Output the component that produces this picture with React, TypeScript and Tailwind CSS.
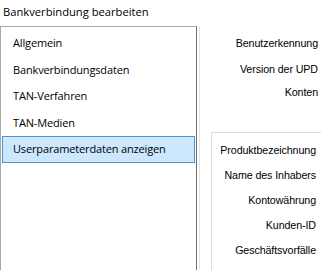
const items = [
  'Allgemein',
  'Bankverbindungsdaten',
  'TAN-Verfahren',
  'TAN-Medien',
  'Userparameterdaten anzeigen',
]

const topLabels = [
  { text: 'Benutzerkennung', h: 'h-[26px]' },
  { text: 'Version der UPD', h: 'h-[26px]' },
  { text: 'Konten', h: 'h-[20px]' },
]

const groupLabels = ['Produktbezeichnung', 'Name des Inhabers', 'Kontowährung', 'Kunden-ID', 'Geschäftsvorfälle']

export default function App() {
  return (
    <div className="w-[321px] h-[270px] bg-white overflow-hidden flex flex-col text-black">
      <div className="h-[26px] pl-[3px] pt-[4px] text-[11.2px] leading-4 font-['Open_Sans',sans-serif]">
        Bankverbindung bearbeiten
      </div>
      <div className="flex flex-1 min-h-0">
        <div className="w-[197px] border-t border-l border-r border-t-[#a8a8a8] border-l-[#a8a8a8] border-r-[#6f6f6f] pt-[3px] pl-[1px] pr-[1px] font-['Open_Sans',sans-serif] text-[11px] tracking-[-0.15px]">
          {items.map((it, i) => {
            const sel = i === items.length - 1
            return (
              <div
                key={it}
                className={
                  sel
                    ? 'h-[26.5px] flex items-center pl-[10px] bg-[#cce8ff] border border-[#4f93cf]'
                    : 'h-[26.5px] flex items-center pl-[11px]'
                }
              >
                {it}
              </div>
            )
          })}
        </div>
        <div className="w-[3px] border-r border-[#e3e3e3]" />
        <div className="flex-1 flex flex-col font-['Liberation_Sans',Arial,sans-serif] text-[10.7px] tracking-[-0.1px]">
          <div className="pt-[4px] pr-[3px]">
            {topLabels.map((l) => (
              <div key={l.text} className={`${l.h} flex items-center justify-end`}>
                {l.text}
              </div>
            ))}
          </div>
          <div className="mt-[30px] ml-[11px] flex-1 border-t border-l border-[#dcdcdc] pt-[5px] pr-[5px]">
            {groupLabels.map((g) => (
              <div key={g} className="h-[25px] flex items-center justify-end">
                {g}
              </div>
            ))}
          </div>
        </div>
      </div>
    </div>
  )
}
